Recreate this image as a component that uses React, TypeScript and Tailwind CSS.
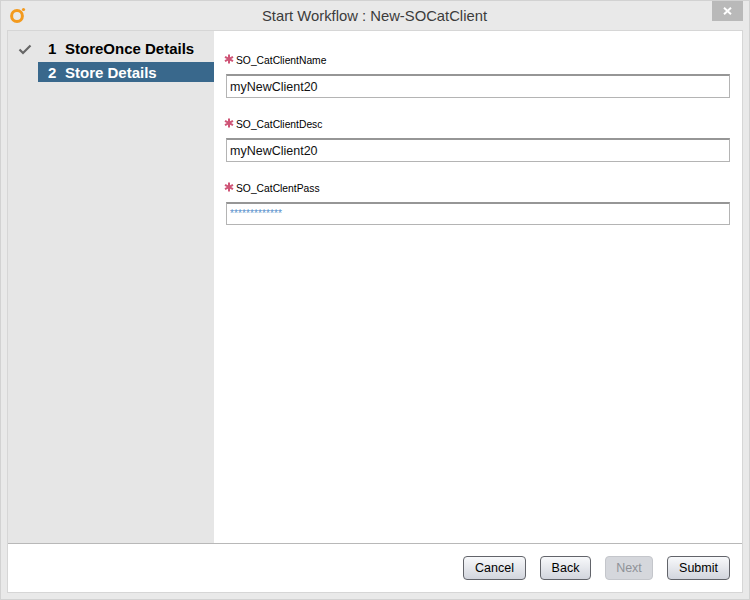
import React from "react";

function Star() {
  return (
    <svg width="10" height="10" viewBox="0 0 10 10" className="shrink-0 -mt-[2px]">
      <g stroke="#cf5577" strokeWidth="2" strokeLinecap="butt">
        <line x1="5" y1="0.5" x2="5" y2="9.5" />
        <line x1="1" y1="2.8" x2="9" y2="7.2" />
        <line x1="9" y1="2.8" x2="1" y2="7.2" />
      </g>
    </svg>
  );
}

function Field({ label, value, password }: { label: string; value: string; password?: boolean }) {
  return (
    <div className="flex flex-col">
      <div className="flex items-center h-[16px] gap-[2px] pl-[10px]">
        <Star />
        <span className="text-[10.3px] text-black leading-none pt-[2px]">{label}</span>
      </div>
      <div
        className={
          (password ? "h-[23px] mt-[6px] " : "h-[24px] mt-[6px] ") +
          "ml-[12px] border border-[#b4b4b4] border-t-2 border-t-[#969696] bg-white flex items-center pl-[3px]"
        }
      >
        {password ? (
          <span className="text-[10.3px] text-[#5b93cc] leading-none pt-[1px]">{value}</span>
        ) : (
          <span className="text-[12.5px] text-[#111] leading-none pt-[1px]">{value}</span>
        )}
      </div>
    </div>
  );
}

function Btn({ label, width, disabled }: { label: string; width: string; disabled?: boolean }) {
  return (
    <button
      className={
        width +
        " h-[24px] rounded-[4px] border text-[12.5px] pt-[2px] flex items-center justify-center " +
        (disabled
          ? "border-[#c4c6cb] bg-[#d5d7dc] text-[#8f9298]"
          : "border-[#62646a] bg-gradient-to-b from-[#f8f9fb] to-[#d2d5dd] text-black")
      }
    >
      {label}
    </button>
  );
}

export default function App() {
  return (
    <div
      className="w-[750px] h-[600px] bg-[#e9e9e9] border border-[#d2d2d2] flex flex-col overflow-hidden"
      style={{ fontFamily: '"Liberation Sans", Arial, sans-serif' }}
    >
      <div className="h-[29px] shrink-0 flex items-center relative">
        <svg width="20" height="20" viewBox="0 0 20 20" className="absolute left-[7px] top-[4px]">
          <circle cx="9" cy="11" r="5.4" fill="none" stroke="#f39a1e" strokeWidth="3" />
          <circle cx="15.5" cy="4.5" r="1.6" fill="#f39a1e" />
        </svg>
        <div className="flex-1 text-center text-[14.8px] text-[#3c3c3c] pt-[1px] pr-[1px]">Start Workflow : New-SOCatClient</div>
        <div className="absolute right-[6px] top-0 w-[31px] h-[20px] bg-[#b9b9b9] flex items-center justify-center">
          <svg width="9" height="8" viewBox="0 0 9 8">
            <path d="M1 0.8 L8 7.2 M8 0.8 L1 7.2" stroke="#fff" strokeWidth="2" />
          </svg>
        </div>
      </div>
      <div className="mx-[6px] mb-[6px] flex-1 flex flex-col border border-[#d6d6d6] bg-white min-h-0">
        <div className="flex-1 flex min-h-0">
          <div className="w-[206px] bg-[#e6e6e6] pt-[7px] shrink-0">
            <div className="h-[23px] flex items-center">
              <svg width="14" height="11" viewBox="0 0 14 11" className="ml-[10px]">
                <path d="M1.5 5.5 L5 9 L12.5 1.5" fill="none" stroke="#666" strokeWidth="2.2" />
              </svg>
              <span className="ml-[16px] text-[15px] font-bold text-black w-[17px]">1</span>
              <span className="text-[15px] font-bold text-black">StoreOnce Details</span>
            </div>
            <div className="h-[20px] mt-[1px] ml-[30px] bg-[#39688c] flex items-center pl-[10px] pt-[2px]">
              <span className="text-[15px] font-bold text-white w-[17px]">2</span>
              <span className="text-[15px] font-bold text-white">Store Details</span>
            </div>
          </div>
          <div className="flex-1 pt-[21px] pr-[12px] flex flex-col gap-[18px]">
            <Field label="SO_CatClientName" value="myNewClient20" />
            <Field label="SO_CatClientDesc" value="myNewClient20" />
            <Field label="SO_CatClentPass" value="*************" password />
          </div>
        </div>
        <div className="h-[49px] shrink-0 border-t border-[#b8b8b8] flex items-center justify-end pr-[12px] pb-[1px]">
          <Btn label="Cancel" width="w-[63px]" />
          <div className="w-[14px]" />
          <Btn label="Back" width="w-[51px]" />
          <div className="w-[14px]" />
          <Btn label="Next" width="w-[48px]" disabled />
          <div className="w-[14px]" />
          <Btn label="Submit" width="w-[63px]" />
        </div>
      </div>
    </div>
  );
}
